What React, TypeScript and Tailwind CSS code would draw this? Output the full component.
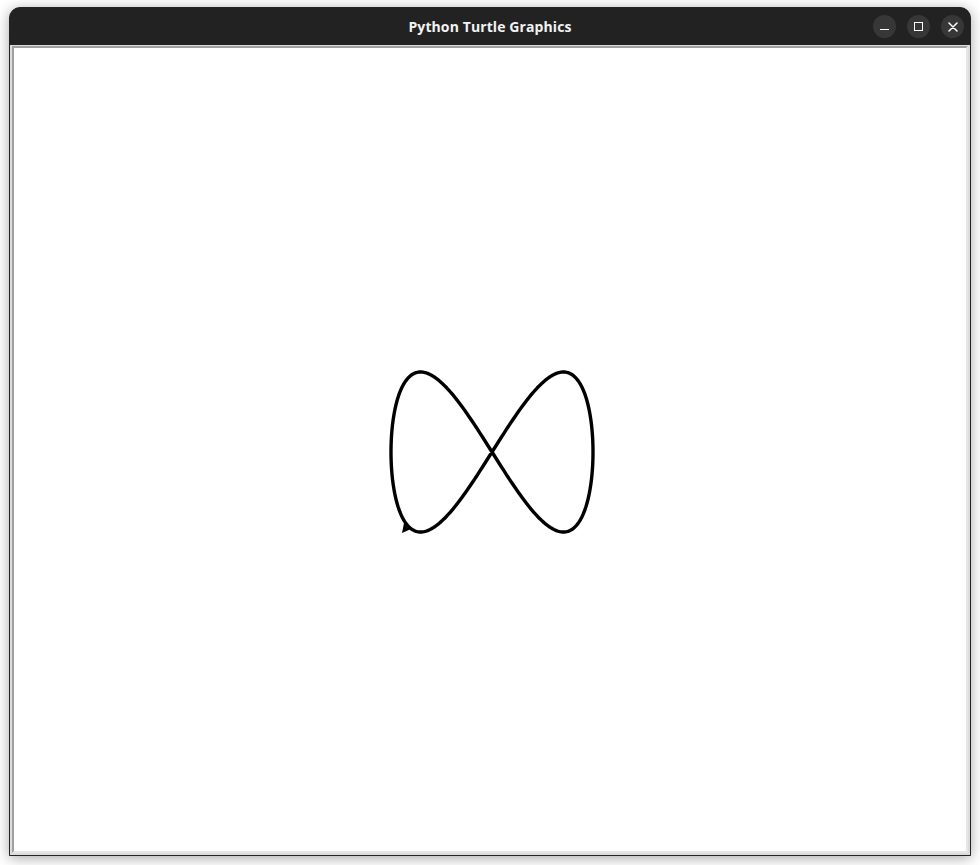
import React from 'react';

// Lissajous figure-eight in page coordinates
const buildCurve = () => {
    const cx = 492;
    const cy = 452;
    const pts: string[] = [];
    for (let i = 0; i <= 400; i++) {
        const t = (i / 400) * Math.PI * 2;
        const x = cx - 101 * Math.sin(t);
        const y = cy - 80 * Math.sin(2 * t);
        pts.push(`${x.toFixed(2)},${y.toFixed(2)}`);
    }
    return 'M' + pts.join(' L');
};

const TitleButton: React.FC<{ children: React.ReactNode }> = ({ children }) => (
    <div className="w-[23px] h-[23px] rounded-full bg-[#373737] flex items-center justify-center">
        {children}
    </div>
);

export default function App() {
    const d = buildCurve();

    return (
        <div className="w-[980px] h-[865px] bg-white pt-[7px] pl-[9px]">
            <div className="w-[962px] h-[849px] flex flex-col rounded-t-[11px] border border-[#232323] bg-[#232323] shadow-[0_2px_14px_rgba(0,0,0,0.35)]">
                <div className="relative h-[37px] shrink-0 rounded-t-[10px] bg-[#222222] flex items-center justify-center">
                    <span
                        className="text-[14px] font-bold text-[#f2f2f2] tracking-[0.1px]"
                        style={{ fontFamily: '"Open Sans", "Noto Sans", sans-serif' }}
                    >
                        Python Turtle Graphics
                    </span>
                    <div className="absolute right-[6px] top-[7px] flex gap-[11px]">
                        <TitleButton>
                            <div className="w-[9px] h-[1.5px] bg-white mt-[6px]" />
                        </TitleButton>
                        <TitleButton>
                            <div className="w-[9px] h-[9px] border-[1.5px] border-white" />
                        </TitleButton>
                        <TitleButton>
                            <svg width="10" height="10" viewBox="0 0 10 10">
                                <path d="M1 1 L9 9 M9 1 L1 9" stroke="white" strokeWidth="1.5" strokeLinecap="round" />
                            </svg>
                        </TitleButton>
                    </div>
                </div>
                <div className="flex-1 bg-[#dcdcdc] pt-[1px] pl-[2px] pr-[2px] pb-[2px] flex">
                    <div className="flex-1 border-2 border-t-[#a0a0a0] border-l-[#a0a0a0] border-r-[#e6e6e6] border-b-[#e6e6e6] bg-white">
                        <svg width="952" height="803" viewBox="14 48 952 803" className="block">
                            <path d={d} fill="none" stroke="black" strokeWidth="3.4" strokeLinejoin="round" />
                            <polygon points="402,533 404,523 407,527 411,529" fill="black" />
                        </svg>
                    </div>
                </div>
            </div>
        </div>
    );
}
